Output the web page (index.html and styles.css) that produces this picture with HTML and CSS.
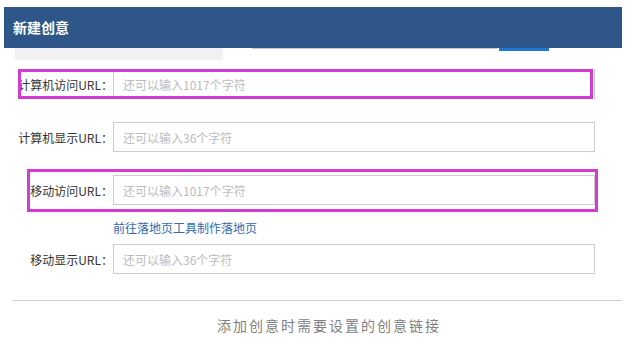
FILE: index.html
```html
<!DOCTYPE html>
<html lang="zh-CN">
<head>
    <meta charset="UTF-8">
    <title>新建创意</title>
    <link rel="stylesheet" href="styles.css">
</head>
<body>

<div class="dialog">
    <div class="dialog-head">新建创意</div>

    <div class="peek">
        <div class="peek-tab"></div>
        <div class="peek-input"></div>
        <div class="peek-btn"></div>
    </div>

    <form class="url-form">
        <div class="row">
            <label for="pcUrl">计算机访问URL：</label>
            <input type="text" id="pcUrl" placeholder="还可以输入1017个字符">
        </div>
        <div class="row">
            <label for="pcShow">计算机显示URL：</label>
            <input type="text" id="pcShow" placeholder="还可以输入36个字符">
        </div>
        <div class="row">
            <label for="mUrl">移动访问URL：</label>
            <input type="text" id="mUrl" placeholder="还可以输入1017个字符">
        </div>
        <a class="tool-link" href="#">前往落地页工具制作落地页</a>
        <div class="row row-last">
            <label for="mShow">移动显示URL：</label>
            <input type="text" id="mShow" placeholder="还可以输入36个字符">
        </div>

        <div class="mark mark-pc"></div>
        <div class="mark mark-mobile"></div>
    </form>

    <div class="divider"></div>
    <p class="caption">添加创意时需要设置的创意链接</p>
</div>

</body>
</html>
```

FILE: styles.css
```css
body {
    margin: 0;
    background-color: white;
    font-family: "Noto Sans CJK SC", "Noto Sans", sans-serif;
    font-size: 12px;
    color: #333;
}
.dialog {
    width: 618px;
    margin: 7px 0 0 4px;
}
.dialog-head {
    height: 41px;
    line-height: 41px;
    padding-left: 9px;
    background-color: #2e5689;
    color: white;
    font-size: 14px;
    font-weight: bold;
}
.peek {
    display: flex;
    align-items: flex-start;
    height: 12px;
}
.peek-tab {
    width: 208px;
    height: 12px;
    margin-left: 11px;
    background-color: #f2f0f3;
}
.peek-input {
    width: 245px;
    height: 1px;
    margin-left: 29px;
    background-color: #c8c8c8;
}
.peek-btn {
    width: 50px;
    height: 3px;
    margin-left: 2px;
    background-color: #1e78d4;
}
.url-form {
    position: relative;
    margin: 0;
    padding-top: 9px;
}
.row {
    display: flex;
    align-items: center;
    height: 30px;
    margin-top: 23px;
}
.row:first-child {
    margin-top: 0;
}
.row-last {
    margin-top: 8px;
}
.row label {
    width: 109px;
    text-align: right;
    color: #333;
}
.row input {
    width: 482px;
    height: 30px;
    box-sizing: border-box;
    padding: 0 9px;
    border: 1px solid #cccccc;
    font-family: inherit;
    font-size: 12px;
    outline: none;
}
.row input::placeholder {
    color: #bcbcbc;
}
.tool-link {
    display: block;
    margin: 15px 0 0 109px;
    line-height: 16px;
    color: #2d6bb3;
    text-decoration: none;
}
.mark {
    position: absolute;
    box-sizing: border-box;
    border: 3px solid #d33bd2;
}
.mark-pc {
    left: 14px;
    top: 9px;
    width: 575px;
    height: 30px;
}
.mark-mobile {
    left: 23px;
    top: 109px;
    width: 571px;
    height: 43px;
}
.divider {
    margin: 26px 0 0 8px;
    width: 610px;
    border-top: 1px solid #d0d0d0;
}
.caption {
    margin: 14px 0 0;
    padding-left: 32px;
    line-height: 20px;
    text-align: center;
    font-size: 14px;
    letter-spacing: 2px;
    color: #7f7f7f;
}
```
